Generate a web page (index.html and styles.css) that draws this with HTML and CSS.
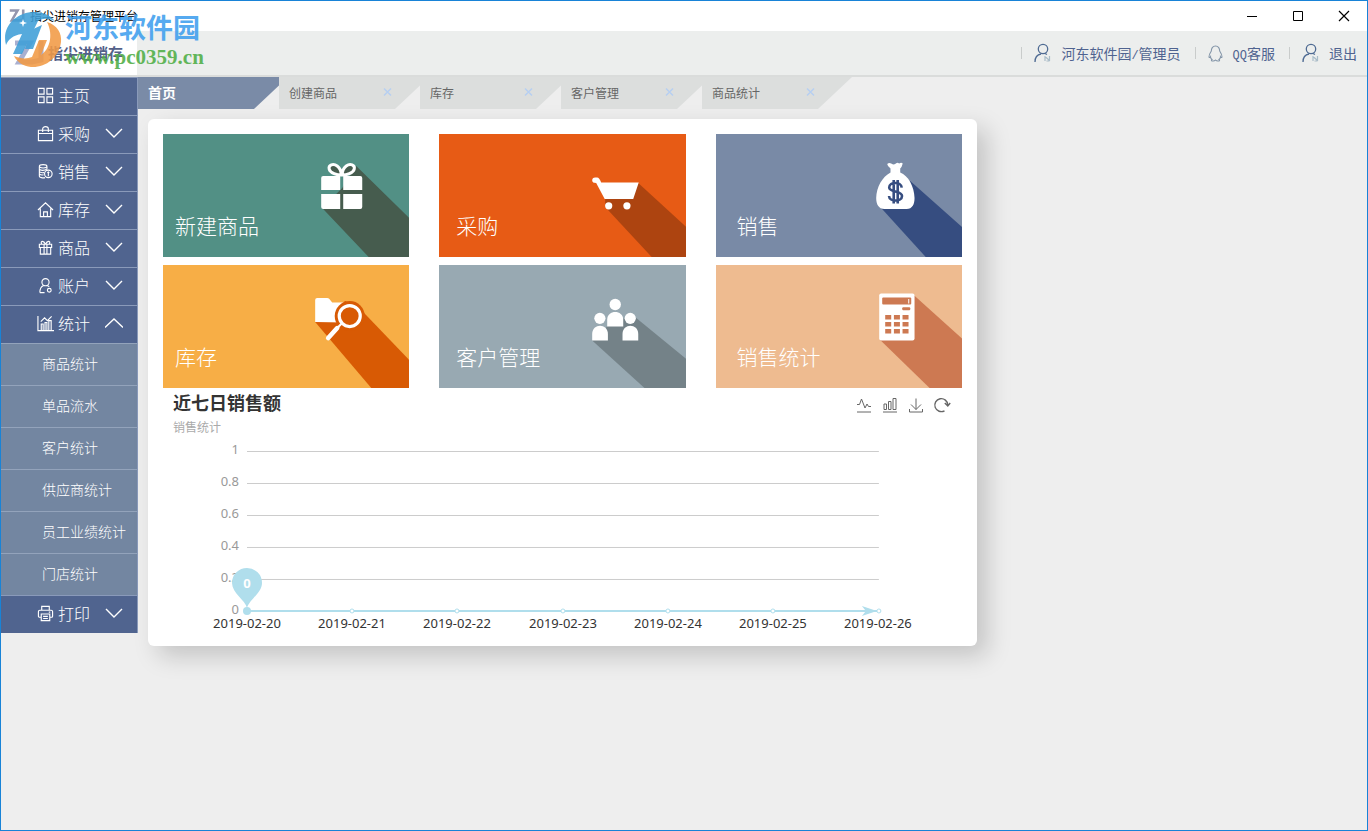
FILE: index.html
```html
<!DOCTYPE html>
<html lang="zh-CN">
<head>
<meta charset="utf-8">
<title>指尖进销存管理平台</title>
<link rel="stylesheet" href="styles.css">
</head>
<body>
<svg class="defs" aria-hidden="true">
  <symbol id="down" viewBox="0 0 18 10"><path d="M1 1l8 8 8-8" fill="none" stroke="currentColor" stroke-width="1.4"/></symbol>
  <symbol id="up" viewBox="0 0 18 10"><path d="M0 9.500l9-8.500 9 8.500" fill="none" stroke="currentColor" stroke-width="1.300"/></symbol>
  <symbol id="user" viewBox="0 0 17 20"><g fill="none" stroke="#4f6b93" stroke-width="1.300"><circle cx="9" cy="6" r="4.700"/><path d="M1 19c0-5 3-7.500 6-8M11 10.500l2 1"/></g><path d="M11 13v5M15.500 13v5M11 13.500l4.500 4M12.500 18h3" fill="none" stroke="#a9bcc8" stroke-width="1.200"/></symbol>
  <symbol id="z" viewBox="0 0 32 27"><path d="M1 3h15L5 22h13l9-2V1" fill="none" stroke="currentColor" stroke-width="5"/></symbol>
</svg>
<div class="window">
  <div class="titlebar">
    <svg class="title-icon" viewBox="0 0 32 27"><use href="#z"/></svg>
    <span class="title-text">指尖进销存管理平台</span>
    <div class="controls">
      <button aria-label="最小化"><svg viewBox="0 0 12 12"><path d="M1 6.500h10" stroke="#000"/></svg></button>
      <button aria-label="最大化"><svg viewBox="0 0 12 12"><path d="M1.500 1.500h9v9h-9z" fill="none" stroke="#000"/></svg></button>
      <button aria-label="关闭"><svg viewBox="0 0 12 12"><path d="M1 1l10 10M11 1L1 11" stroke="#000" stroke-width="1.200"/></svg></button>
    </div>
  </div>
  <header class="header">
    <div class="brand"><svg viewBox="0 0 32 27"><use href="#z"/></svg><strong>指尖进销存</strong></div>
    <nav class="account">
      <a href="#"><svg class="ic-user"><use href="#user"/></svg><span>河东软件园<span class="latin">/</span>管理员</span></a>
      <a href="#"><svg class="ic-qq" viewBox="0 0 15 17"><path d="M7.500 1C4.500 1 3.300 3.500 3.300 6 2 8 .8 10 1 12c.2 1 1 .5 1.500-.3 0 1.300.8 2.200 1.500 2.800-1 .5-.8 1.500 1 1.500 1.200 0 2-.4 2.500-1 .5.600 1.300 1 2.500 1 1.800 0 2-1 1-1.500.7-.6 1.500-1.500 1.500-2.800.5.800 1.300 1.300 1.500.3.200-2-1-4-2.300-6C11.700 3.500 10.500 1 7.500 1z" fill="none" stroke="#8395a8" stroke-width="1.100"/></svg><span><span class="latin">QQ</span>客服</span></a>
      <a href="#"><svg class="ic-user"><use href="#user"/></svg>退出</a>
    </nav>
  </header>
  <div class="body">
    <aside class="sidebar">
      <button class="item"><svg class="mi" viewBox="0 0 18 18"><path d="M1.500 1.500h6v6h-6zM10.500 1.500h6v6h-6zM1.500 10.500h6v6h-6zM10.500 10.500h6v6h-6z"/></svg>主页</button>
      <button class="item"><svg class="mi" viewBox="0 0 18 18"><path d="M1.500 5.500h15v11h-15zM1.500 9h15M6 7.500V4c0-3 6-3 6 0v3.500"/></svg>采购<svg class="chev"><use href="#down"/></svg></button>
      <button class="item"><svg class="mi" viewBox="0 0 18 18"><ellipse cx="6.500" cy="3.500" rx="4" ry="1.800"/><path d="M2.500 4v10c0 1.500 4 2 6 1.500M2.500 6.500c1 1.500 5 2 8 0V4M2.500 9c1 1.300 3 1.500 5 1.200M2.500 11.500c1 1 3 1.300 4.500 1"/><circle cx="12" cy="11.500" r="4"/><path d="M12 9v5M11 10.500l1-1 1 1"/></svg>销售<svg class="chev"><use href="#down"/></svg></button>
      <button class="item"><svg class="mi" viewBox="0 0 18 18"><path d="M1 9.500L9 2l8 7.500M3.500 8v8.500h11V8M7 16.500v-5h4v5"/></svg>库存<svg class="chev"><use href="#down"/></svg></button>
      <button class="item"><svg class="mi" viewBox="0 0 18 18"><path d="M2.500 5.500h13v3.500h-13zM3.500 9v7h11V9M7.500 5.500v10.500M10.500 5.500v10.500M9 5.500C7 1 3 2 5 5.500M9 5.500C11 1 15 2 13 5.500"/></svg>商品<svg class="chev"><use href="#down"/></svg></button>
      <button class="item"><svg class="mi" viewBox="0 0 18 18"><circle cx="9" cy="5.500" r="3.800"/><path d="M3 16.500c0-4 1.500-6.500 4-7.500M3 16.500h5M11 9l2 1.500"/><circle cx="13" cy="14" r="2"/></svg>账户<svg class="chev"><use href="#down"/></svg></button>
      <button class="item"><svg class="mi" viewBox="0 0 18 18"><path d="M1 1v15.500H18M4.500 16V9.500h2V16M8.500 16V8h2v8M12.500 16V6h2.500v10M4 7l4-4 3 3 4.500-4.500"/></svg>统计<svg class="chev"><use href="#up"/></svg></button>
      <ul class="submenu">
        <li><a href="#">商品统计</a></li>
        <li><a href="#">单品流水</a></li>
        <li><a href="#">客户统计</a></li>
        <li><a href="#">供应商统计</a></li>
        <li><a href="#">员工业绩统计</a></li>
        <li><a href="#">门店统计</a></li>
      </ul>
      <button class="item"><svg class="mi" viewBox="0 0 18 18"><path d="M5 5.500v-4h8v4M4.500 13H2.500c-1 0-1-1-1-1V7c0-1 1-1.500 1.500-1.500h12c1 0 1.500.5 1.500 1.500v5c0 1-1 1-1 1h-2M4.500 9.500h9v7h-9zM6.500 12h5M6.500 14.300h5M12.500 7.500h1.500"/></svg>打印<svg class="chev"><use href="#down"/></svg></button>
    </aside>
    <main class="main">
      <div class="tabs">
        <div class="tab active"><button class="tab-name">首页</button></div>
        <div class="tab"><button class="tab-name">创建商品</button><button class="close" aria-label="关闭创建商品"><svg viewBox="0 0 9 8"><path d="M1 .5l7 7M8 .5l-7 7"/></svg></button></div>
        <div class="tab"><button class="tab-name">库存</button><button class="close" aria-label="关闭库存"><svg viewBox="0 0 9 8"><path d="M1 .5l7 7M8 .5l-7 7"/></svg></button></div>
        <div class="tab"><button class="tab-name">客户管理</button><button class="close" aria-label="关闭客户管理"><svg viewBox="0 0 9 8"><path d="M1 .5l7 7M8 .5l-7 7"/></svg></button></div>
        <div class="tab"><button class="tab-name">商品统计</button><button class="close" aria-label="关闭商品统计"><svg viewBox="0 0 9 8"><path d="M1 .5l7 7M8 .5l-7 7"/></svg></button></div>
      </div>
      <div class="content">
      <section class="card">
        <div class="tiles">
          <button class="tile teal">
            <svg class="art" viewBox="0 0 246 123" preserveAspectRatio="xMaxYMax slice"><path d="M193 32l54 53v39h-40.500L159 74l20-20z" fill="#465c4e"/><path d="M160 42h17v14h-19V44q0-2 2-2zM180 42h17q2 0 2 2v12h-19zM158 60h19v15h-17q-2 0-2-2zM180 60h19v13q0 2-2 2h-17z" fill="#fff"/><g fill="#465c4e" stroke="#fff" stroke-width="3"><path d="M178 41c-4 0-11-2-12-6s4-6 8-3 4 6 4 9zM179 41c4 0 11-2 12-6s-4-6-8-3-4 6-4 9z"/></g></svg>
            <span>新建商品</span></button>
          <button class="tile orange">
            <svg class="art" viewBox="0 0 246 123" preserveAspectRatio="xMaxYMax slice"><path d="M199 49l48 44v31h-33.500L166 73v-8z" fill="#ad4410"/><path d="M153 46.500q0-3 3-3h2q2 0 4 5h37.500L194 65h-28.500L157 49q-4 0-4-2.500z" fill="#fff"/><circle cx="169.500" cy="71.700" r="3.600" fill="#fff"/><circle cx="187.700" cy="71.700" r="3.600" fill="#fff"/></svg>
            <span>采购</span></button>
          <button class="tile slate">
            <svg class="art" viewBox="0 0 246 123" preserveAspectRatio="xMaxYMax slice"><path d="M194 47l53 47v30h-36.500L165 74z" fill="#364d80"/><path d="M171 30q2-2 4-.5 3 2 5-.2 1-1 3 .2 2-1.500 3.500 0-1 4-2.500 5v4c8 3 14 14 14.300 25.500 0 6-2 11-8 11h-22c-6 0-8.300-5-8.300-11 .3-11 6-21 14.300-25.500v-4q-3-2-3.300-4.500z" fill="#fff"/><path d="M185.500 53.500c-.5-6-12.500-6-12.500 0 0 5 12.800 3 12.800 8.500 0 6-12.800 6-13 0M177.500 46v23.500M181.500 46v23.500" fill="none" stroke="#364d80" stroke-width="2.600"/></svg>
            <span>销售</span></button>
          <button class="tile amber">
            <svg class="art" viewBox="0 0 246 123" preserveAspectRatio="xMaxYMax slice"><path d="M152 57l30-21 16 9 49 51v28h-38z" fill="#d85a04"/><path d="M152 57V35q0-2 2-2h10q2 0 3 2l2 2.500h12v20z" fill="#fff"/><circle cx="186.500" cy="51" r="15" fill="#d85a04"/><circle cx="186.500" cy="51" r="10.500" fill="#d85a04" stroke="#fff" stroke-width="3.200"/><path d="M179 58l-5 5" stroke="#fff" stroke-width="2"/><path d="M174 63l-4 4" stroke="#d85a04" stroke-width="8"/><path d="M174 63l-9 10" stroke="#fff" stroke-width="4.600" stroke-linecap="round"/></svg>
            <span>库存</span></button>
          <button class="tile steel">
            <svg class="art" viewBox="0 0 246 123" preserveAspectRatio="xMaxYMax slice"><path d="M197 53l50 41v30h-40.500L153 75.500l15-14 16-8z" fill="#748288"/><g fill="#fff"><circle cx="176" cy="39.500" r="5.700"/><path d="M168 61.500v-7c0-10 16-10 16 0v7z"/><circle cx="160.700" cy="53.300" r="5.600"/><path d="M153 75.500V69c0-11 15.700-11 15.700 0v6.500z"/><circle cx="191" cy="53.300" r="5.600"/><path d="M183.300 75.500V69c0-11 15.700-11 15.700 0v6.500z"/></g></svg>
            <span>客户管理</span></button>
          <button class="tile peach">
            <svg class="art" viewBox="0 0 246 123" preserveAspectRatio="xMaxYMax slice"><path d="M198 30.500l49 44V124h-32.500L164 75z" fill="#cd7952"/><rect x="163" y="28.500" width="35.300" height="47" rx="2" fill="#fff"/><g fill="#cd7952"><rect x="166" y="32.500" width="29" height="7" rx="1"/><rect x="186" y="42.300" width="8" height="3" rx="1"/><path d="M169 50h6v4.500h-6zM177.700 50h6v4.500h-6zM186.300 50h6v4.500h-6zM169 57h6v4.500h-6zM177.700 57h6v4.500h-6zM186.300 57h6v4.500h-6zM169 64h6v4.500h-6zM177.700 64h6v4.500h-6zM186.300 64h6v4.500h-6z"/></g><path d="M192.500 34v4.500" stroke="#fff"/></svg>
            <span>销售统计</span></button>
        </div>
        <div class="chart-head">
          <div><h2>近七日销售额</h2><p>销售统计</p></div>
          <div class="tools">
            <button aria-label="折线图"><svg viewBox="0 0 16 16"><path d="M1 7.500h2.500L5.500 2l3.500 9 2-4 1.500 2.500H15M1 15h14"/></svg></button>
            <button aria-label="柱状图"><svg viewBox="0 0 16 16"><path d="M2 7h2.500v5.500H2zM6.500 4.500H9v8H6.500zM11 1.500h3v11h-3zM1 15h14"/></svg></button>
            <button aria-label="下载"><svg viewBox="0 0 16 16"><path d="M8 1.500v11M3 7.500l5 5 5-5M1.500 12v3h13v-3"/></svg></button>
            <button aria-label="刷新"><svg viewBox="0 0 16 16"><path d="M10.500 13.800A6.500 6.500 0 1 1 13.800 8M10.800 6l3 3 2.400-3"/></svg></button>
          </div>
        </div>
        <svg class="plot" viewBox="0 0 799 194" role="img" aria-label="近七日销售额">
          <path d="M84 14.500h632M84 46.500h632M84 78.500h632M84 110.500h632M84 142.500h632" stroke="#ccc"/>
          <g class="y-axis"><text x="76" y="17">1</text><text x="76" y="49">0.8</text><text x="76" y="81">0.6</text><text x="76" y="113">0.4</text><text x="76" y="145">0.2</text><text x="76" y="177">0</text></g>
          <path d="M84 174h632" stroke="#b0deec" stroke-width="2"/>
          <g fill="#fff" stroke="#b0deec"><circle cx="189" cy="174" r="2"/><circle cx="294" cy="174" r="2"/><circle cx="400" cy="174" r="2"/><circle cx="505" cy="174" r="2"/><circle cx="610" cy="174" r="2"/><circle cx="716" cy="174" r="2"/></g>
          <path d="M699 169l15 5-15 5 4-5z" fill="#b0deec"/>
          <circle cx="84" cy="174" r="4" fill="#b0deec"/>
          <path d="M84 171c-2-8-15-15-15-25a15 15 0 0 1 30 0c0 10-13 17-15 25z" fill="#b0deec"/>
          <text class="pin" x="84" y="151">0</text>
          <g class="x-axis"><text x="84" y="191">2019-02-20</text><text x="189" y="191">2019-02-21</text><text x="294" y="191">2019-02-22</text><text x="400" y="191">2019-02-23</text><text x="505" y="191">2019-02-24</text><text x="610" y="191">2019-02-25</text><text x="715" y="191">2019-02-26</text></g>
        </svg>
      </section>
      </div>
    </main>
  </div>
  <div class="watermark">
    <svg viewBox="0 0 58 58"><path d="M2 34C-3 15 13 1 30 1c9 0 16 3 21 9-7-3-13-3-17 0L18 43H9l9-20c-9 1-14 6-16 11z" fill="#3f9fd8"/><path d="M27 19l11-5-9 24h-8z" fill="#3f9fd8"/><path d="M43 11c10 3 15 11 14 20-2 16-16 26-30 25-8-1-14-5-17-11 7 3 13 3 18 1l7-17h8l-6 15c8-5 13-19 6-33z" fill="#f29a45"/><path d="M19 8l1 3 3 1-3 1-1 3-1-3-3-1 3-1z" fill="#fff"/></svg>
    <div><div class="wm-name">河东软件园</div><div class="wm-url">www.pc0359.cn</div></div>
  </div>
</div>
</body>
</html>
```
FILE: styles.css
```css
* { box-sizing: border-box; }
body { margin: 0; font-family: "Liberation Sans", "Noto Sans CJK SC", sans-serif; font-size: 14px; background: #eee; }
button { border: 0; padding: 0; margin: 0; background: none; font: inherit; color: inherit; }
a { color: inherit; text-decoration: none; }
.defs { position: absolute; width: 0; height: 0; }
.window { position: relative; min-height: 100vh; border: 1px solid #1883d7; background: #eee; overflow: hidden; }

.titlebar { display: flex; align-items: center; height: 30px; background: #fff; padding-left: 8px; }
.title-icon { width: 17px; height: 14px; margin-right: 4px; color: #9496ae; }
.title-text { padding-bottom: 2px; font-size: 12px; color: #000; }
.controls { display: flex; margin-left: auto; }
.controls button { display: grid; place-items: center; width: 46px; height: 30px; padding-bottom: 1px; }
.controls svg { width: 12px; height: 12px; }

.header { display: flex; justify-content: space-between; height: 46px; background: #eceeed; border-bottom: 2px solid #dadcdb; }
.brand { display: flex; align-items: center; gap: 2px; width: 136px; padding-left: 13px; background: #fff; }
.brand svg { width: 32px; height: 27px; color: #aab0d0; }
.brand strong { padding-bottom: 2px; font-size: 15px; color: #536089; }
.account { display: flex; align-items: center; padding-right: 10px; color: #4f6390; }
.account a { display: flex; align-items: center; gap: 10px; padding: 0 14px 0 13px; position: relative; }
.account a:last-child { padding-right: 0; }
.account a::before { content: ""; position: absolute; left: 0; width: 1px; height: 12px; background: #c9cccb; }
.ic-user { width: 17px; height: 20px; }
.ic-qq { width: 15px; height: 17px; }
.latin { font-family: "Liberation Mono", monospace; font-size: 12px; }

.body { display: flex; align-items: flex-start; }
.sidebar { flex: none; width: 137px; border-right: 1px solid #8a9aba; color: #fff; }
.item { display: flex; align-items: center; gap: 4px; width: 100%; height: 38px; padding: 0 14px 3px 36px; background: #50648f; border-top: 1px solid #8a9aba; font-size: 16px; font-weight: 300; }
.mi { width: 17px; height: 17px; fill: none; stroke: #fff; stroke-width: 1.2; }
.chev { width: 18px; height: 10px; margin-left: auto; }
.submenu { margin: 0; padding: 0; list-style: none; }
.submenu a { display: flex; align-items: center; height: 42px; padding: 0 0 4px 41px; background: #7386a1; border-top: 1px solid #93a3bb; font-weight: 300; white-space: nowrap; }

.main { flex: 1; min-width: 0; }
.tabs { display: flex; margin-bottom: 10px; }
.tab { display: flex; align-items: center; justify-content: space-between; width: 150px; height: 32px; margin-right: -9px; padding: 0 37px 2px 10px; background: #dcdedd; color: #666; font-size: 12px; clip-path: polygon(0 0, 100% 0, 116px 100%, 0 100%); }
.tab.active { background: #7a8ba7; color: #fff; font-size: 14px; font-weight: 700; }
.close svg { display: block; width: 9px; height: 8px; stroke: #b6cff2; stroke-width: 1.4; }

.content { padding-left: 10px; }
.card { width: 68%; padding: 15px; background: #fff; border-radius: 6px; box-shadow: 10px 10px 24px rgba(0, 0, 0, .18); }
.tiles { display: grid; grid-template-columns: repeat(3, 1fr); gap: 8px 30px; }
.tile { position: relative; display: flex; align-items: flex-end; aspect-ratio: 2 / 1; padding: 0 12px 15px; overflow: hidden; color: #fff; font-size: 21px; line-height: 30px; font-weight: 300; text-align: left; }
.tile:nth-child(3n+2) { padding-left: 17px; }
.tile:nth-child(3n) { padding-left: 21px; }
.tile span { position: relative; }
.art { position: absolute; inset: 0; width: 100%; height: 100%; }
.teal { background: #529085; }
.orange { background: #e75b15; }
.slate { background: #798aa6; }
.amber { background: #f7ae46; }
.steel { background: #98a9b2; }
.peach { background: #eebb90; }

.chart-head { display: flex; justify-content: space-between; height: 49px; padding: 3px 12px 0 10px; }
.chart-head h2 { margin: 0; font-size: 18px; line-height: 26px; color: #333; }
.chart-head p { margin: 0; font-size: 12px; line-height: 22px; color: #aaa; }
.tools { display: flex; gap: 10px; padding-top: 6px; align-items: flex-start; }
.tools svg { display: block; width: 16px; height: 16px; fill: none; stroke: #666; overflow: visible; }
.tools button:last-child svg { stroke-width: 1.4; }
.plot { display: block; width: 100%; font-family: "Noto Sans", sans-serif; font-size: 13px; }
.y-axis { fill: #999; text-anchor: end; }
.x-axis { fill: #333; text-anchor: middle; }
.pin { fill: #fff; font-weight: 700; text-anchor: middle; }

.watermark { position: absolute; left: 3px; top: 10px; display: flex; gap: 3px; opacity: .88; pointer-events: none; }
.watermark svg { width: 58px; height: 58px; }
.wm-name { font-size: 27px; line-height: 37px; font-weight: 700; color: #3f9fee; }
.wm-url { font-family: "Liberation Serif", serif; font-size: 21px; line-height: 18px; font-weight: 700; color: #4fae45; }
```
